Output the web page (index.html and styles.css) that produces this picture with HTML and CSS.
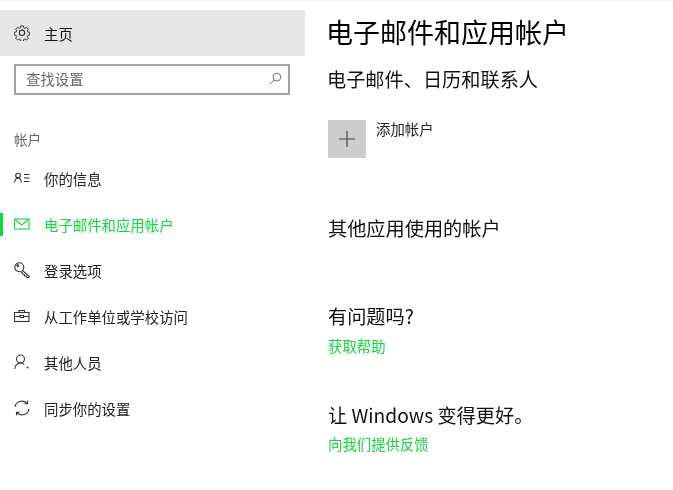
FILE: index.html
```html
<!DOCTYPE html>
<html lang="zh-CN">
<head>
<meta charset="utf-8">
<title>电子邮件和应用帐户</title>
<link rel="stylesheet" href="styles.css">
</head>
<body>
<div class="window">
  <aside class="sidebar">
    <div class="home">
      <svg class="icon" viewBox="0 0 16 16"><path d="M6.500.8h3l.4 2.100 1.300.6 1.800-1.200 2.100 2.100-1.200 1.800.6 1.300 2.100.4v3l-2.100.4-.6 1.300 1.200 1.800-2.100 2.100-1.800-1.200-1.300.6-.4 2.100h-3l-.4-2.100-1.300-.6-1.800 1.200-2.100-2.100 1.200-1.800-.6-1.300-2.100-.4v-3l2.100-.4.6-1.300-1.200-1.800 2.100-2.100 1.800 1.200 1.300-.6z" transform="translate(.8 .2) scale(.9)"/><circle cx="8" cy="7.800" r="2.700"/></svg>
      <span>主页</span>
    </div>
    <div class="search">
      <span>查找设置</span>
      <svg class="search-icon" viewBox="0 0 14 14"><circle cx="8.500" cy="5.500" r="4.200"/><path d="M5.500 8.500 1 13"/></svg>
    </div>
    <div class="group">帐户</div>
    <nav class="nav">
      <a class="item">
        <svg class="icon" viewBox="0 0 16 16"><circle cx="4" cy="5.500" r="2.300"/><path d="M.7 12.500c0-2.600 1.300-4.300 3.300-4.300s3.300 1.700 3.300 4.300M10 4.500h5.500M10 8h5.500M10 11.500h5.500"/></svg>
        <span>你的信息</span>
      </a>
      <a class="item active">
        <svg class="icon" viewBox="0 0 16 16"><rect x=".5" y="3" width="14.500" height="10"/><path d="M.8 3.300 7.700 9l7-5.700"/></svg>
        <span>电子邮件和应用帐户</span>
      </a>
      <a class="item">
        <svg class="icon" viewBox="0 0 16 16"><circle cx="5.300" cy="5.300" r="4.500"/><circle cx="3.800" cy="3.800" r=".9"/><path d="m8.500 8.500 6.500 5.800v1.200h-2.200l-.8-1.500h-1.300l-.5-1.500-1.100-.3-2-2.400"/></svg>
        <span>登录选项</span>
      </a>
      <a class="item">
        <svg class="icon" viewBox="0 0 16 16"><rect x=".5" y="4.500" width="14.500" height="9"/><path d="M5 4.500V2.500h5.500v2M.5 8.500H6M9.500 8.500H15M6 7.500h3.500v2H6z"/></svg>
        <span>从工作单位或学校访问</span>
      </a>
      <a class="item">
        <svg class="icon" viewBox="0 0 16 16"><circle cx="6.500" cy="5" r="4"/><path d="M.8 15c0-3.500 2.500-6 5.700-6 1.500 0 2.800.5 3.800 1.400"/><circle class="dot" cx="13.500" cy="13.500" r="1"/></svg>
        <span>其他人员</span>
      </a>
      <a class="item">
        <svg class="icon" viewBox="0 0 16 16"><path d="M1 7A7 6.500 0 0 1 13 3.200M15 9A7 6.500 0 0 1 3 12.800M13.500.8v3h-3M2.500 15.200v-3h3"/></svg>
        <span>同步你的设置</span>
      </a>
    </nav>
  </aside>
  <main class="content">
    <h1 class="title">电子邮件和应用帐户</h1>
    <h2 class="subtitle">电子邮件、日历和联系人</h2>
    <div class="add">
      <div class="add-tile"><svg viewBox="0 0 16 16"><path d="M8 0v16M0 8h16"/></svg></div>
      <span class="add-label">添加帐户</span>
    </div>
    <h2 class="heading others">其他应用使用的帐户</h2>
    <h2 class="heading question">有问题吗?</h2>
    <a class="link">获取帮助</a>
    <h2 class="heading better">让 Windows 变得更好。</h2>
    <a class="link">向我们提供反馈</a>
  </main>
</div>
</body>
</html>
```
FILE: styles.css
```css
* { box-sizing: border-box; }
html, body { margin: 0; padding: 0; background: #fff; }
body {
  width: 673px;
  height: 490px;
  overflow: hidden;
  font-family: "Noto Sans CJK SC", "Liberation Sans", sans-serif;
  color: #1a1a1a;
}
.window {
  display: flex;
  height: 490px;
  border-top: 1px solid #f3f3ec;
  filter: blur(0.5px);
}
.sidebar { width: 305px; flex: none; padding-top: 9px; }
.home {
  height: 46px;
  background: #e6e6e6;
  display: flex;
  align-items: center;
  gap: 14px;
  padding-left: 14px;
  font-size: 14.400px;
  color: #111;
}
.icon {
  width: 16px;
  height: 16px;
  flex: none;
  fill: none;
  stroke: currentColor;
  stroke-width: 1.100;
}
.dot { fill: currentColor; stroke: none; }
.home .icon { color: #333; }
.search {
  margin: 8px 15px 0 14px;
  height: 31px;
  border: 2px solid #a3a3a3;
  display: flex;
  align-items: center;
  justify-content: space-between;
  padding: 0 6px 2px 10px;
  font-size: 14.400px;
  color: #6a6a6a;
}
.search-icon {
  width: 13px;
  height: 13px;
  fill: none;
  stroke: #666;
  stroke-width: 1;
}
.group {
  margin: 35px 0 0 14px;
  font-size: 13.600px;
  line-height: 18px;
  color: #6a6a6a;
}
.nav { margin-top: 7px; display: flex; flex-direction: column; }
.item {
  height: 46px;
  display: flex;
  align-items: center;
  gap: 14px;
  padding-left: 14px;
  font-size: 14.400px;
  color: #222;
  position: relative;
}
.item .icon { color: #333; }
.item.active, .item.active .icon { color: #12d840; }
.item.active::before {
  content: "";
  position: absolute;
  left: 0;
  top: 12px;
  width: 3px;
  height: 23px;
  background: #12d840;
}
.content { flex: 1; padding: 0 0 0 23px; }
.title {
  margin: 13px 0 0 -2px;
  font-size: 27px;
  line-height: 36px;
  font-weight: 400;
  color: #000;
}
.subtitle {
  margin: 15px 0 0 -1px;
  font-size: 19.200px;
  line-height: 28px;
  font-weight: 400;
  color: #111;
}
.add { display: flex; gap: 10px; margin-top: 27px; }
.add-tile {
  width: 38px;
  height: 38px;
  background: #cdcdcd;
  display: flex;
  align-items: center;
  justify-content: center;
}
.add-tile svg { width: 16px; height: 16px; fill: none; stroke: #444; stroke-width: 1.200; }
.add-label { font-size: 14.400px; line-height: 20px; margin-top: -1px; color: #222; }
.heading {
  margin: 0;
  font-size: 19.200px;
  line-height: 28px;
  font-weight: 400;
  color: #111;
}
.others { margin-top: 56px; }
.question { margin-top: 60px; }
.better { margin-top: 45px; }
.link {
  display: block;
  font-size: 14.400px;
  line-height: 20px;
  margin-top: 6px;
  color: #12d840;
}
.better + .link { margin-top: 5px; }
```
